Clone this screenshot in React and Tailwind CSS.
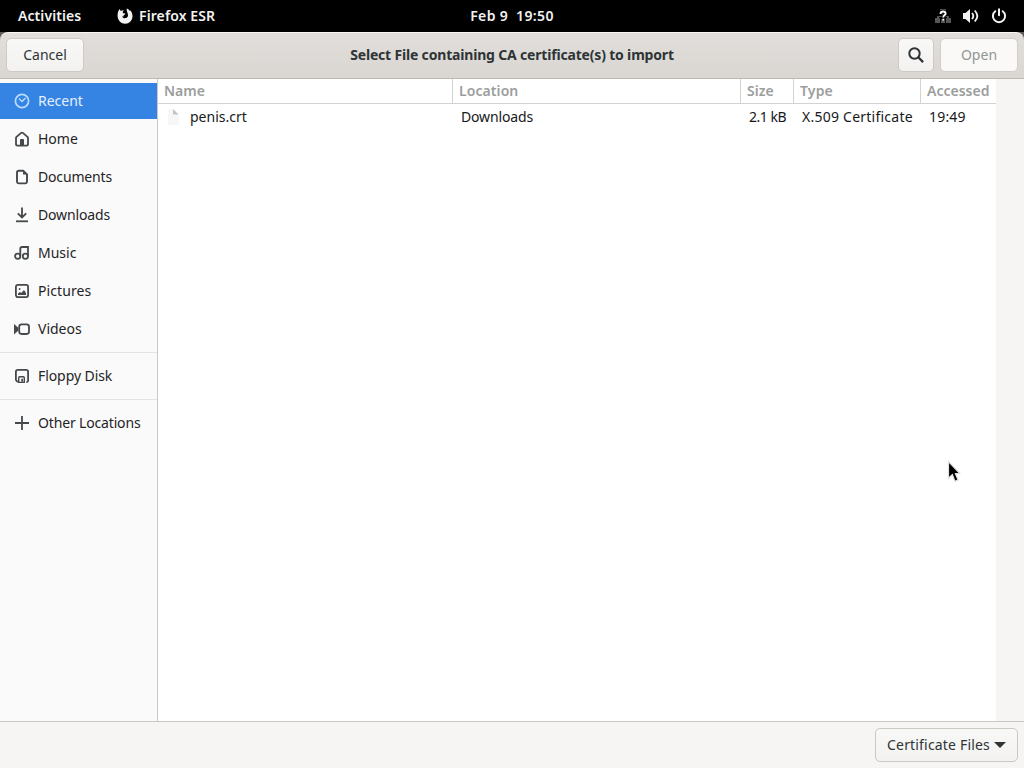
import clsx from 'clsx';

const places = [
    { label: 'Recent', icon: 'recent', active: true },
    { label: 'Home', icon: 'home' },
    { label: 'Documents', icon: 'documents', spacing: 'tracking-[-0.17px]' },
    { label: 'Downloads', icon: 'downloads', spacing: 'tracking-[-0.15px]' },
    { label: 'Music', icon: 'music' },
    { label: 'Pictures', icon: 'pictures', spacing: 'tracking-[0.1px]' },
    { label: 'Videos', icon: 'videos' },
];

const columns = [
    { label: 'Name', cell: 'w-[295px] pl-1.5' },
    { label: 'Location', cell: 'w-[288px] pl-1.5 tracking-[0.08px]' },
    { label: 'Size', cell: 'w-[53px] pl-1.5' },
    { label: 'Type', cell: 'w-[127px] pl-1.5 tracking-[0.15px]' },
    { label: 'Accessed', cell: 'w-[75px] pl-1.5' },
];

const button = 'flex items-center justify-center rounded-[5px] border bg-linear-to-b from-[#f8f8f7] to-[#f3f2f1] text-[#2e3436]';

function PlaceIcon({ name }) {
    return (
        <svg viewBox="0 0 16 16" className="size-4 shrink-0" fill="none" stroke="currentColor" strokeWidth="2">
            {name === 'recent' && (
                <>
                    <circle cx="8" cy="8" r="6.6" strokeWidth="1.7" />
                    <path d="M5 5.5 8 8.5l3.5-3.5" strokeWidth="1.5" />
                </>
            )}
            {name === 'home' && (
                <>
                    <path d="M2 7q0-.6.5-1.1L7.2 1.9q.8-.6 1.6 0l4.7 4q.5.5.5 1.1V13a1.6 1.6 0 0 1-1.6 1.6H3.6A1.6 1.6 0 0 1 2 13z" strokeWidth="1.8" strokeLinejoin="round" />
                    <path d="M6 14V9a1 1 0 0 1 1-1h2a1 1 0 0 1 1 1v5z" fill="currentColor" stroke="none" />
                </>
            )}
            {name === 'documents' && (
                <>
                    <path d="M3 3.6a1.8 1.8 0 0 1 1.8-1.8h4.4L13 5.3v7.3a1.8 1.8 0 0 1-1.8 1.8H4.8A1.8 1.8 0 0 1 3 12.6z" strokeWidth="1.9" />
                    <path d="M9 1.5v4h4.5z" fill="currentColor" stroke="none" />
                </>
            )}
            {name === 'downloads' && (
                <>
                    <path d="M8 .5v9.5M3.8 6.3 8 10.5l4.2-4.2" strokeWidth="1.8" />
                    <path d="M2 14.3h12" strokeWidth="1.8" />
                </>
            )}
            {name === 'music' && (
                <>
                    <path d="M6.3 11V3.8Q6.3 2 8.1 2H14V11.5" strokeWidth="1.8" />
                    <circle cx="3.7" cy="11.3" r="2.6" strokeWidth="1.8" />
                    <circle cx="11.4" cy="11.3" r="2.6" strokeWidth="1.8" />
                </>
            )}
            {name === 'pictures' && (
                <>
                    <rect x="1.9" y="1.9" width="12.2" height="12.2" rx="2" strokeWidth="1.8" />
                    <path d="M4 12v-1.5L6 9l1.2 1L10 7l2 3v2z" fill="currentColor" stroke="none" />
                    <circle cx="5.6" cy="6" r=".9" fill="currentColor" stroke="none" />
                </>
            )}
            {name === 'videos' && (
                <>
                    <rect x="5.2" y="3.4" width="9.8" height="9.6" rx="2.4" strokeWidth="1.8" />
                    <path d="M0 3 4.4 6.8v2.7L0 13.5z" fill="currentColor" stroke="none" />
                </>
            )}
            {name === 'floppy' && (
                <>
                    <path d="M3.8 14.2 1.9 12V3.7A1.8 1.8 0 0 1 3.7 1.9h8.6a1.8 1.8 0 0 1 1.8 1.8v8.7a1.8 1.8 0 0 1-1.8 1.8" strokeWidth="1.8" />
                    <path d="M4.7 14.4v-4.6q0-1 1-1h3.6q1 0 1 1v4.6z" strokeWidth="1.4" />
                    <path d="M7.3 10.7h1.7v3H7.3z" fill="currentColor" stroke="none" />
                </>
            )}
            {name === 'other' && <path d="M8 1v14M1 8h14" strokeWidth="1.8" />}
        </svg>
    );
}

function Place({ label, icon, active, spacing }) {
    return (
        <li
            className={clsx(
                'flex h-9 items-center gap-2 pl-3.5',
                active ? 'bg-[#3584e4] text-[#e5f0fc]' : 'text-[#1f2426]',
            )}
        >
            <span className={clsx('flex', active ? 'text-[#b9dcff]' : 'text-[#45494b]')}>
                <PlaceIcon name={icon} />
            </span>
            <span className={clsx('whitespace-nowrap', spacing)}>{label}</span>
        </li>
    );
}

function TopBar() {
    return (
        <header className="grid h-8 shrink-0 grid-cols-3 items-center bg-black font-semibold text-[#f2f2f2]">
            <div className="flex items-center pl-[18px]">
                <span className="w-[99px] tracking-[0.08px]">Activities</span>
                <svg viewBox="0 0 16 16" className="mr-1.5 size-4" fill="currentColor">
                    <path d="M1.2 3.6 2.4 1l1.4 1.9Q5.2 2 6.8 2.2L5.6 4.1l.6 1.2 2.2.2q0 1.1-1.8 1.8l.1 1.1-1.5-.2c.3 1.7 2 2.4 3.6 1.9 1.9-.6 2.6-2.4 2-4.2C10.400 4.300 9.600 3.100 9.700.5c1.500.5 2.600 1.400 3.200 2.600l.6-.7c1.300 1.600 2 3.600 2 5.800A7.400 7.400 0 0 1 .6 8.600C.5 6.700.6 5 1.200 3.600Z" />
                </svg>
                <span className="tracking-[0.1px]">Firefox ESR</span>
            </div>
            <div className="text-center tracking-[0.35px] whitespace-pre">Feb 9  19:50</div>
            <div className="flex items-center justify-end gap-3 pr-[17px]">
                <svg viewBox="0 0 16 16" className="size-4">
                    <path d="M5 1h6v5H9v2h5v2h2v5h-5v-5h1V9H4v1h1v5H0v-5h2V8h5V6H5z" fill="#555" />
                    <path d="M6 15v-4h4v4z" fill="#555" />
                    <path
                        d="M5.5 6Q5.600 3.500 8.100 3.500q2.500 0 2.500 2 0 1.100-1.200 1.800-1.100.7-1.100 2.200M8.300 10.800v2"
                        fill="none"
                        stroke="#000"
                        strokeWidth="3.6"
                    />
                    <path d="M5.500 6Q5.600 3.500 8.100 3.500q2.500 0 2.500 2 0 1.100-1.200 1.800-1.100.7-1.100 2.200" fill="none" stroke="#fff" strokeWidth="1.9" />
                    <path d="M7.300 10.700h2v2h-2z" fill="#fff" />
                </svg>
                <svg viewBox="0 0 16 16" className="size-4" fill="none" stroke="currentColor" strokeWidth="1.8">
                    <path d="M0 5h2.5L7 1v14L2.5 11H0z" fill="currentColor" stroke="none" />
                    <path d="M9 5q2.7 3 0 6" />
                    <path d="M11.7 2.5q5.3 5.500 0 11" />
                </svg>
                <svg viewBox="0 0 16 16" className="size-4" fill="none" stroke="currentColor" strokeWidth="2" strokeLinecap="round">
                    <path d="M4.3 3.2a6.1 6.1 0 1 0 7.4 0M8 1.3v6" />
                </svg>
            </div>
        </header>
    );
}

function DialogHeader() {
    return (
        <div className="bg-[#5c5c5c]">
            <div className="flex h-[47px] items-start justify-between rounded-t-lg border-t border-b border-t-[#f8f7f6] border-b-[#bfb8b1] bg-linear-to-b from-[#e1dedb] to-[#dad6d2] px-1.5 pt-[5px]">
                <div className="flex w-32">
                    <button className={clsx(button, 'h-[34px] w-[78px] border-[#cfcac5]')}>Cancel</button>
                </div>
                <h1 className="pt-[7px] font-bold tracking-[-0.18px] whitespace-nowrap text-[#2e3436]">
                    Select File containing CA certificate(s) to import
                </h1>
                <div className="flex w-32 justify-end gap-1.5">
                    <button className={clsx(button, 'h-[34px] w-9 border-[#cfcac5]')}>
                        <svg viewBox="0 0 16 16" className="size-4" fill="none" stroke="currentColor" strokeWidth="2">
                            <circle cx="6.5" cy="6.5" r="5.2" />
                            <path d="m10.3 10.3 4.8 4.8" strokeWidth="2.3" />
                        </svg>
                    </button>
                    <button className="flex h-[34px] w-[78px] items-center justify-center rounded-[5px] border border-[#d3cec9] bg-[#faf9f8] text-[#929595]">
                        Open
                    </button>
                </div>
            </div>
        </div>
    );
}

function Sidebar() {
    return (
        <nav className="w-[158px] shrink-0 border-r border-[#cdc7c2] bg-[#fafafa] pt-1">
            <ul className="flex flex-col gap-0.5">
                {places.map((place) => (
                    <Place key={place.label} {...place} />
                ))}
            </ul>
            <ul className="mt-[5px] border-y border-[#e4e3e2] py-[5px]">
                <Place label="Floppy Disk" icon="floppy" spacing="tracking-[-0.08px]" />
            </ul>
            <ul className="mt-[5px]">
                <Place label="Other Locations" icon="other" spacing="tracking-[-0.16px]" />
            </ul>
        </nav>
    );
}

function FileList() {
    return (
        <main className="w-[838px] bg-white">
            <div className="flex h-[25px] border-b border-[#d5d3d1] font-semibold text-[#9b9e9d]">
                {columns.map((column) => (
                    <div
                        key={column.label}
                        className={clsx('flex items-center border-r border-[#d5d3d1] last:border-r-0', column.cell)}
                    >
                        {column.label}
                    </div>
                ))}
            </div>
            <div className="flex h-[26px] items-center whitespace-nowrap text-[#17191a]">
                <div className="flex w-[295px] items-center gap-2 pl-2">
                    <svg viewBox="0 0 16 16" className="size-4">
                        <path d="M2 0h6l5 5v11H2z" fill="#f7f7f7" />
                        <path d="M7 0v5.500H12.500z" fill="#c4c4c4" />
                    </svg>
                    <span>penis.crt</span>
                </div>
                <div className="w-[288px] pl-2 tracking-[-0.15px]">Downloads</div>
                <div className="w-[53px] pl-2 tracking-[-0.5px]">2.1 kB</div>
                <div className="w-[127px] pl-2 tracking-[0.24px]">X.509 Certificate</div>
                <div className="w-[75px] pl-2 tracking-[0.2px]">19:49</div>
            </div>
        </main>
    );
}

export default function App() {
    return (
        <div className="relative flex h-screen w-screen flex-col overflow-hidden bg-[#f6f5f4] font-['Noto_Sans',sans-serif] text-[14px] leading-5">
            <TopBar />
            <DialogHeader />
            <div className="flex min-h-0 flex-1">
                <Sidebar />
                <FileList />
            </div>
            <footer className="flex h-[47px] shrink-0 items-center justify-end border-t border-[#cdc7c2] px-1.5">
                <button className={clsx(button, 'h-[34px] w-[143px] gap-1 border-[#cdc7c2] whitespace-nowrap')}>
                    <span className="tracking-[0.18px]">Certificate Files</span>
                    <svg viewBox="0 0 12 6" className="h-1.5 w-3" fill="currentColor">
                        <path d="M0 0h12L6 6z" />
                    </svg>
                </button>
            </footer>
            <svg viewBox="0 0 14 24" className="absolute top-[460px] left-[947px] h-6 w-3.5">
                <path d="M1.5 1.5v16.8l3.9-3.7 2.5 6.7 3.2-1.4-2.7-6.2h4.5z" fill="#000" stroke="#e2e2e2" strokeWidth="1.2" />
            </svg>
        </div>
    );
}
